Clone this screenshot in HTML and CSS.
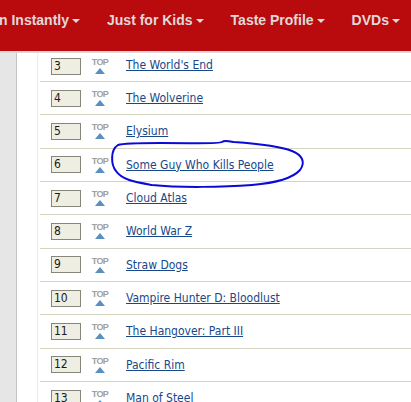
FILE: index.html
```html
<!DOCTYPE html>
<html>
<head>
<meta charset="utf-8">
<link rel="stylesheet" href="styles.css">
</head>
<body>
<header class="topbar">
  <nav class="nav">
    <span class="nav-item">n Instantly<span class="caret"></span></span>
    <span class="nav-item">Just for Kids<span class="caret"></span></span>
    <span class="nav-item">Taste Profile<span class="caret"></span></span>
    <span class="nav-item">DVDs<span class="caret"></span></span>
  </nav>
</header>
<div class="page">
  <div class="sidebar"></div>
  <div class="gutter"></div>
  <div class="list">
    <div class="row partial"><span class="rank">3</span><span class="top"><span class="top-label">TOP</span><span class="tri"></span></span><a class="title" href="#">The World's End</a></div>
    <div class="row"><span class="rank">4</span><span class="top"><span class="top-label">TOP</span><span class="tri"></span></span><a class="title" href="#">The Wolverine</a></div>
    <div class="row"><span class="rank">5</span><span class="top"><span class="top-label">TOP</span><span class="tri"></span></span><a class="title" href="#">Elysium</a></div>
    <div class="row"><span class="rank">6</span><span class="top"><span class="top-label">TOP</span><span class="tri"></span></span><a class="title" href="#">Some Guy Who Kills People</a></div>
    <div class="row"><span class="rank">7</span><span class="top"><span class="top-label">TOP</span><span class="tri"></span></span><a class="title" href="#">Cloud Atlas</a></div>
    <div class="row"><span class="rank">8</span><span class="top"><span class="top-label">TOP</span><span class="tri"></span></span><a class="title" href="#">World War Z</a></div>
    <div class="row"><span class="rank">9</span><span class="top"><span class="top-label">TOP</span><span class="tri"></span></span><a class="title" href="#">Straw Dogs</a></div>
    <div class="row"><span class="rank">10</span><span class="top"><span class="top-label">TOP</span><span class="tri"></span></span><a class="title" href="#">Vampire Hunter D: Bloodlust</a></div>
    <div class="row"><span class="rank">11</span><span class="top"><span class="top-label">TOP</span><span class="tri"></span></span><a class="title" href="#">The Hangover: Part III</a></div>
    <div class="row"><span class="rank">12</span><span class="top"><span class="top-label">TOP</span><span class="tri"></span></span><a class="title" href="#">Pacific Rim</a></div>
    <div class="row"><span class="rank">13</span><span class="top"><span class="top-label">TOP</span><span class="tri"></span></span><a class="title" href="#">Man of Steel</a></div>
  </div>
</div>
<svg class="scribble" width="411" height="402" viewBox="0 0 411 402">
  <path d="M118 145 C 110 150, 111 165, 116 171 C 122 180, 135 182, 152 185 C 180 188, 225 187, 252 185 C 275 183, 292 179, 300 170 C 306 162, 302 155, 292 151 C 282 147, 262 144, 234 142 C 228 141, 224 140, 222 142 C 219 144, 200 143, 160 143 C 140 143, 124 143, 118 145" fill="none" stroke="#0a0ad8" stroke-width="2" stroke-linecap="round"/>
</svg>
</body>
</html>
```

FILE: styles.css
```css
html, body {
  margin: 0;
  padding: 0;
}
body {
  width: 411px;
  height: 402px;
  overflow: hidden;
  background: #ffffff;
  font-family: "DejaVu Sans Condensed", "DejaVu Sans", Verdana, sans-serif;
  font-stretch: condensed;
  position: relative;
}
.topbar {
  height: 51px;
  background: #b90b0e;
  border-bottom: 2px solid #d8d8d8;
  box-sizing: content-box;
}
.nav {
  display: flex;
  align-items: flex-start;
  gap: 27px;
  padding-top: 12px;
  margin-left: -1px;
}
.nav-item {
  font-family: "Liberation Sans", Arial, sans-serif;
  font-stretch: normal;
  font-weight: bold;
  font-size: 14px;
  line-height: 16px;
  color: #e2d8d8;
  white-space: nowrap;
  display: flex;
  align-items: center;
}
.caret {
  display: inline-block;
  width: 0;
  height: 0;
  margin-left: 3px;
  margin-top: 1px;
  border-left: 4px solid transparent;
  border-right: 4px solid transparent;
  border-top: 4px solid #e2d8d8;
}
.page {
  display: flex;
  height: 349px;
}
.sidebar {
  width: 16px;
  background: #e6e6e6;
  border-right: 1px solid #c4c4c4;
}
.gutter {
  width: 20px;
  border-right: 1px solid #ececec;
}
.list {
  flex: 1;
  margin-left: 2px;
  display: flex;
  flex-direction: column;
}
.row {
  flex: none;
  height: 33.333px;
  box-sizing: border-box;
  border-bottom: 1px solid #d6d3c0;
  display: flex;
  align-items: center;
}
.row.partial {
  height: 29px;
  align-items: flex-start;
  padding-top: 5px;
}
.rank {
  margin-left: 11px;
  width: 30px;
  height: 17px;
  box-sizing: border-box;
  border: 1px solid #86867a;
  background: #efeee2;
  font-size: 12px;
  line-height: 15px;
  padding-left: 2px;
  color: #1a1a1a;
}
.top {
  margin-left: 11px;
  width: 16px;
  display: flex;
  flex-direction: column;
  align-items: center;
}
.top-label {
  font-family: "Liberation Sans", Arial, sans-serif;
  font-stretch: normal;
  font-weight: bold;
  font-size: 9px;
  line-height: 8px;
  letter-spacing: -0.6px;
  color: #a0a0a0;
}
.tri {
  margin-top: 2px;
  width: 0;
  height: 0;
  border-left: 5px solid transparent;
  border-right: 5px solid transparent;
  border-bottom: 6px solid #5a8fc0;
}
.title {
  margin-left: 18px;
  font-size: 12px;
  color: #18488a;
  text-decoration: underline;
}
.scribble {
  position: absolute;
  left: 0;
  top: 0;
  pointer-events: none;
}
```
